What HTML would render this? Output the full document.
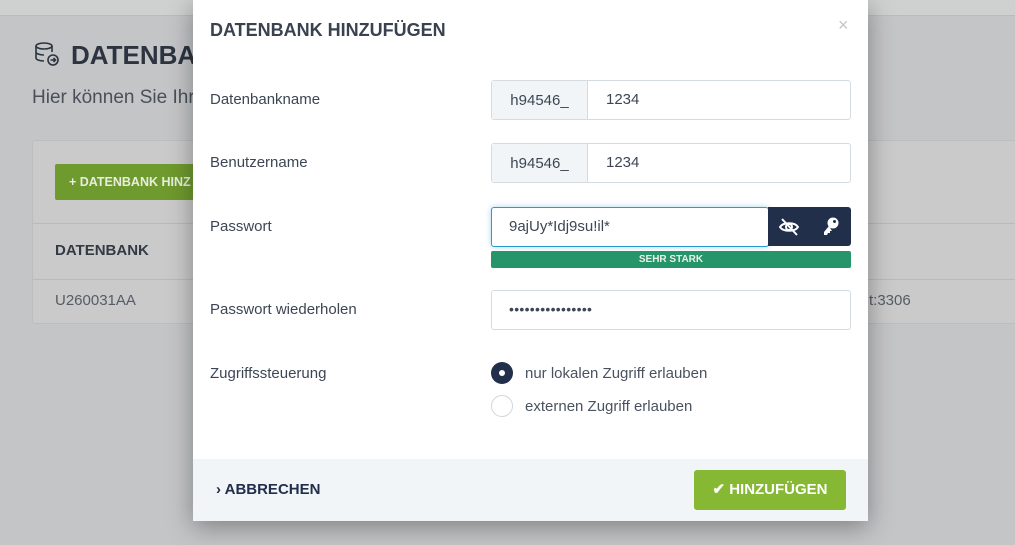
<!DOCTYPE html>
<html><head><meta charset="utf-8"><style>
*{box-sizing:border-box;margin:0;padding:0}
body{width:1015px;height:545px;overflow:hidden;background:#c4c5c7;font-family:"Liberation Sans",sans-serif;position:relative;color:#3a4250}
.a{position:absolute}
.topbar{left:0;top:0;width:1015px;height:16px;background:#cfd0d0;border-bottom:1px solid #b9bcbf}
.card{left:32px;top:140px;width:990px;height:184px;background:#cacaca;border:1px solid #bdbdbd;border-radius:3px}
.modal{left:193px;top:0;width:675px;height:521px;background:#fff;box-shadow:0 6px 24px rgba(0,0,0,.35)}
.lbl{left:17px;font-size:15px;color:#3d4654}
.inp{border:1px solid #d4dbe1;border-radius:3px;background:#fff;font-size:15px;color:#3d4654}
.pre{background:#f2f5f8;border-right:1px solid #d4dbe1;display:flex;align-items:center;justify-content:center;height:100%}
</style></head><body>
<div class="a topbar"></div>
<svg class="a" style="left:34px;top:41px" width="26" height="26" viewBox="0 0 26 26" fill="none" stroke="#2c3440" stroke-width="1.6"><ellipse cx="10" cy="5" rx="8" ry="3"/><path d="M2 5v12c0 1.7 3.6 3 8 3M18 5v6M2 11c0 1.7 3.6 3 8 3"/><circle cx="19" cy="19" r="5"/><path d="M16.5 19h5M19.5 17l2 2-2 2"/></svg>
<div class="a" style="left:71px;top:40px;font-size:26px;font-weight:bold;color:#2c3440">DATENBANK</div>
<div class="a" style="left:32px;top:87px;font-size:19px;color:#4a4f5a">Hier können Sie Ihre</div>
<div class="a card">
 <div class="a" style="left:22px;top:23px;width:160px;height:36px;background:#6f9a2d;border-radius:2px;color:#e8eedf;font-size:12.5px;font-weight:bold;padding:11px 0 0 14px">+ DATENBANK HINZ</div>
 <div class="a" style="left:0;top:82px;width:100%;border-top:1px solid #b8babb"></div>
 <div class="a" style="left:22px;top:101px;font-size:15px;font-weight:bold;color:#333a44">DATENBANK</div>
 <div class="a" style="left:0;top:138px;width:100%;border-top:1px solid #b8babb"></div>
 <div class="a" style="left:22px;top:151px;font-size:15px;color:#555c66">U260031AA</div>
 <div class="a" style="left:836px;top:151px;font-size:15px;color:#555c66">t:3306</div>
</div>
<div class="a modal">
 <div class="a" style="left:17px;top:20px;font-size:18px;font-weight:bold;color:#3a4250">DATENBANK HINZUFÜGEN</div>
 <div class="a" style="left:645px;top:15px;font-size:18px;color:#c4c8cc">×</div>
 <div class="a lbl" style="top:91px">Datenbankname</div>
 <div class="a inp" style="left:298px;top:80px;width:360px;height:40px;display:flex"><div class="pre" style="width:96px">h94546_</div><div style="padding:10px 0 0 18px">1234</div></div>
 <div class="a lbl" style="top:154px">Benutzername</div>
 <div class="a inp" style="left:298px;top:143px;width:360px;height:40px;display:flex"><div class="pre" style="width:96px">h94546_</div><div style="padding:10px 0 0 18px">1234</div></div>
 <div class="a lbl" style="top:218px">Passwort</div>
 <div class="a inp" style="left:298px;top:207px;width:278px;height:40px;border-color:#2a9bd0;box-shadow:0 0 6px rgba(42,155,208,.4);padding:10px 0 0 17px">9ajUy*Idj9su!il*</div>
 <div class="a" style="left:575px;top:207px;width:83px;height:39px;background:#212f4b;border-radius:0 3px 3px 0"></div>
 <svg class="a" style="left:585px;top:217px" width="22" height="20" viewBox="0 0 22 20" fill="none" stroke="#fff" stroke-width="2"><path d="M2 10c3-5 15-5 18 0c-3 5-15 5-18 0z"/><circle cx="11" cy="10" r="3"/><path d="M4 2l15 16"/></svg>
 <svg class="a" style="left:629px;top:216px" width="18" height="20" viewBox="0 0 18 20"><circle cx="11" cy="7" r="5.5" fill="#fff"/><circle cx="12.5" cy="5.5" r="1.5" fill="#212f4b"/><path d="M7 10l-5 6v3h3l1-2h2v-2h2z" fill="#fff"/></svg>
 <div class="a" style="left:298px;top:251px;width:360px;height:17px;background:#27956a;border-radius:2px;color:#e5f3ec;font-size:10px;font-weight:bold;text-align:center;line-height:17px">SEHR STARK</div>
 <div class="a lbl" style="top:301px">Passwort wiederholen</div>
 <div class="a inp" style="left:298px;top:290px;width:360px;height:40px;padding:10px 0 0 17px;font-size:14px;letter-spacing:0.3px">••••••••••••••••</div>
 <div class="a lbl" style="top:365px">Zugriffssteuerung</div>
 <div class="a" style="left:298px;top:362px;width:22px;height:22px;border-radius:50%;background:#212f4b"></div>
 <div class="a" style="left:306px;top:370px;width:6px;height:6px;border-radius:50%;background:#fff"></div>
 <div class="a" style="left:332px;top:365px;font-size:15px;color:#4a5260">nur lokalen Zugriff erlauben</div>
 <div class="a" style="left:298px;top:395px;width:22px;height:22px;border-radius:50%;border:1px solid #cfd6dd"></div>
 <div class="a" style="left:332px;top:398px;font-size:15px;color:#4a5260">externen Zugriff erlauben</div>
 <div class="a" style="left:0;top:459px;width:675px;height:62px;background:#f2f5f8"></div>
 <div class="a" style="left:23px;top:481px;font-size:15px;font-weight:bold;color:#212f4b">› ABBRECHEN</div>
 <div class="a" style="left:501px;top:470px;width:152px;height:40px;background:#86b834;border-radius:3px;color:#fff;font-size:15px;font-weight:bold;text-align:center;line-height:40px">✔ HINZUFÜGEN</div>
</div>
</body></html>
